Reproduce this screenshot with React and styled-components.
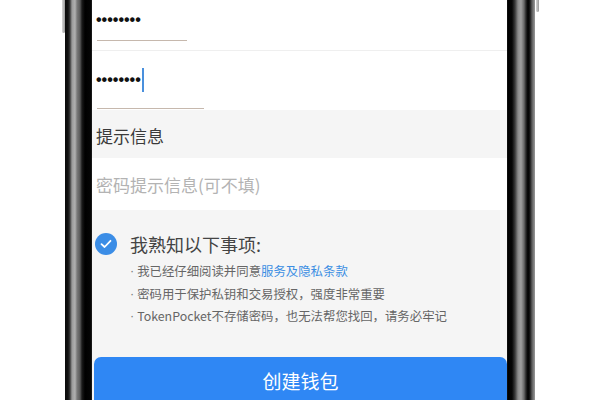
import React from "react";
import styled, { createGlobalStyle } from "styled-components";

const Global = createGlobalStyle`
  html, body { margin: 0; padding: 0; background: #ffffff; }
  body { font-family: "Noto Sans CJK SC", "Noto Sans", sans-serif; }
  * { box-sizing: border-box; }
`;

const Page = styled.div`
  width: 600px;
  height: 400px;
  overflow: hidden;
  display: flex;
  padding-left: 65px;
  background: #ffffff;
`;

const Bezel = styled.div`
  position: relative;
  flex: none;
  width: ${(p) => p.$w}px;
  height: 100%;
  background: ${(p) =>
    p.$side === "left"
      ? "linear-gradient(to right, #0a0a0a 0px, #111 3px, #3a3a3a 5px, #9a9a9a 7px, #b0b0b0 10px, #7a7a7a 12px, #5a5a5a 15px, #1a1a1a 17px, #000 20px, #050505 26px, #2a2a2a 27px)"
      : "linear-gradient(to right, #1a1a1a 0px, #000 1px, #050505 5px, #3a3a3a 8px, #8a8a8a 11px, #a0a0a0 14px, #6a6a6a 17px, #2a2a2a 19px, #000 21px, #1a1a1a 23px, #5c5c5c 25px, #9a9a9a 28px)"};

  &::before {
    content: "";
    position: absolute;
    top: 0;
    ${(p) => (p.$side === "left" ? "left: -3px;" : "right: -4px;")}
    width: 3px;
    height: ${(p) => (p.$side === "left" ? 33 : 12)}px;
    background: linear-gradient(to right, #d8d8d8, #9a9a9a);
    border-radius: 0 0 2px 2px;
  }
`;

const Screen = styled.div`
  flex: none;
  width: 415px;
  height: 100%;
  background: #f5f5f5;
  display: flex;
  flex-direction: column;
`;

const PasswordField = styled.div`
  flex: none;
  background: #ffffff;
  padding: ${(p) => p.$top}px 0 0 4px;
  height: ${(p) => p.$h}px;
  border-bottom: ${(p) => (p.$divider ? "1px solid #efefef" : "none")};
  display: flex;
  flex-direction: column;
`;

const DotsLine = styled.div`
  height: ${(p) => p.$h}px;
  display: flex;
  align-items: center;
`;

const Dots = styled.span`
  font-family: "Liberation Sans", Arial, sans-serif;
  font-size: 16px;
  font-weight: bold;
  line-height: 20px;
  color: #111;
`;

const Caret = styled.span`
  display: inline-block;
  width: 2px;
  height: 24px;
  margin-left: 1px;
  background: #4a90dd;
`;

const Underline = styled.div`
  width: ${(p) => p.$w}px;
  height: 1.5px;
  margin-top: ${(p) => p.$gap}px;
  margin-left: 1px;
  background: #c6b8ad;
`;

const SectionHeader = styled.div`
  flex: none;
  height: 48px;
  padding: 3px 0 0 4px;
  display: flex;
  align-items: center;
  font-size: 17px;
  color: #3a3a3a;
  background: #f5f5f5;
`;

const HintInput = styled.div`
  flex: none;
  height: 52px;
  padding: 1px 0 0 4px;
  display: flex;
  align-items: center;
  font-size: 17px;
  color: #b3b3b3;
  background: #ffffff;
`;

const Notice = styled.div`
  flex: none;
  padding: 22px 0 0 3px;
  display: flex;
  flex-direction: column;
`;

const CheckRow = styled.div`
  height: 24px;
  display: flex;
  align-items: center;
  gap: 13px;
`;

const CheckCircle = styled.div`
  flex: none;
  width: 22px;
  height: 22px;
  border-radius: 50%;
  background: #3b8de6;
  display: flex;
  align-items: center;
  justify-content: center;
`;

const CheckTitle = styled.span`
  font-size: 18px;
  color: #444;
  line-height: 24px;
`;

const Bullets = styled.ul`
  list-style: none;
  margin: 4px 0 0 35px;
  padding: 0;
`;

const Bullet = styled.li`
  height: 22.5px;
  display: flex;
  align-items: center;
  font-size: 12.4px;
  line-height: 22.5px;
  color: #666;
  white-space: nowrap;
`;

const Marker = styled.span`
  font-family: "Liberation Sans", Arial, sans-serif;
  color: #777;
  margin-right: 3px;
`;

const Link = styled.span`
  color: #3b8ee3;
`;

const CreateButton = styled.button`
  flex: none;
  margin: 0 0 0 2px;
  margin-top: ${(p) => p.$top}px;
  width: 413px;
  height: 50px;
  border: none;
  border-radius: 7px;
  background: #2f87f4;
  color: #ffffff;
  font-family: "Noto Sans CJK SC", "Noto Sans", sans-serif;
  font-size: 19px;
  padding: 0 0 4px 0;
  display: flex;
  align-items: center;
  justify-content: center;
`;

export default function App() {
  return (
    <>
      <Global />
      <Page>
        <Bezel $side="left" $w={27} />
        <Screen>
          <PasswordField $top={10} $h={51} $divider>
            <DotsLine $h={20}>
              <Dots>••••••••</Dots>
            </DotsLine>
            <Underline $w={90} $gap={9.5} />
          </PasswordField>
          <PasswordField $top={17} $h={59}>
            <DotsLine $h={24}>
              <Dots>••••••••</Dots>
              <Caret />
            </DotsLine>
            <Underline $w={107} $gap={15.5} />
          </PasswordField>
          <SectionHeader>提示信息</SectionHeader>
          <HintInput>密码提示信息(可不填)</HintInput>
          <Notice>
            <CheckRow>
              <CheckCircle>
                <svg width="12" height="10" viewBox="0 0 12 10">
                  <path
                    d="M1.5 5.2 L4.6 8 L10.5 1.8"
                    fill="none"
                    stroke="#ffffff"
                    strokeWidth="1.8"
                    strokeLinecap="round"
                    strokeLinejoin="round"
                  />
                </svg>
              </CheckCircle>
              <CheckTitle>我熟知以下事项:</CheckTitle>
            </CheckRow>
            <Bullets>
              <Bullet>
                <Marker>·</Marker>我已经仔细阅读并同意<Link>服务及隐私条款</Link>
              </Bullet>
              <Bullet>
                <Marker>·</Marker>密码用于保护私钥和交易授权，强度非常重要
              </Bullet>
              <Bullet>
                <Marker>·</Marker>TokenPocket不存储密码，也无法帮您找回，请务必牢记
              </Bullet>
            </Bullets>
          </Notice>
          <CreateButton $top={29.5}>创建钱包</CreateButton>
        </Screen>
        <Bezel $side="right" $w={28} />
      </Page>
    </>
  );
}
